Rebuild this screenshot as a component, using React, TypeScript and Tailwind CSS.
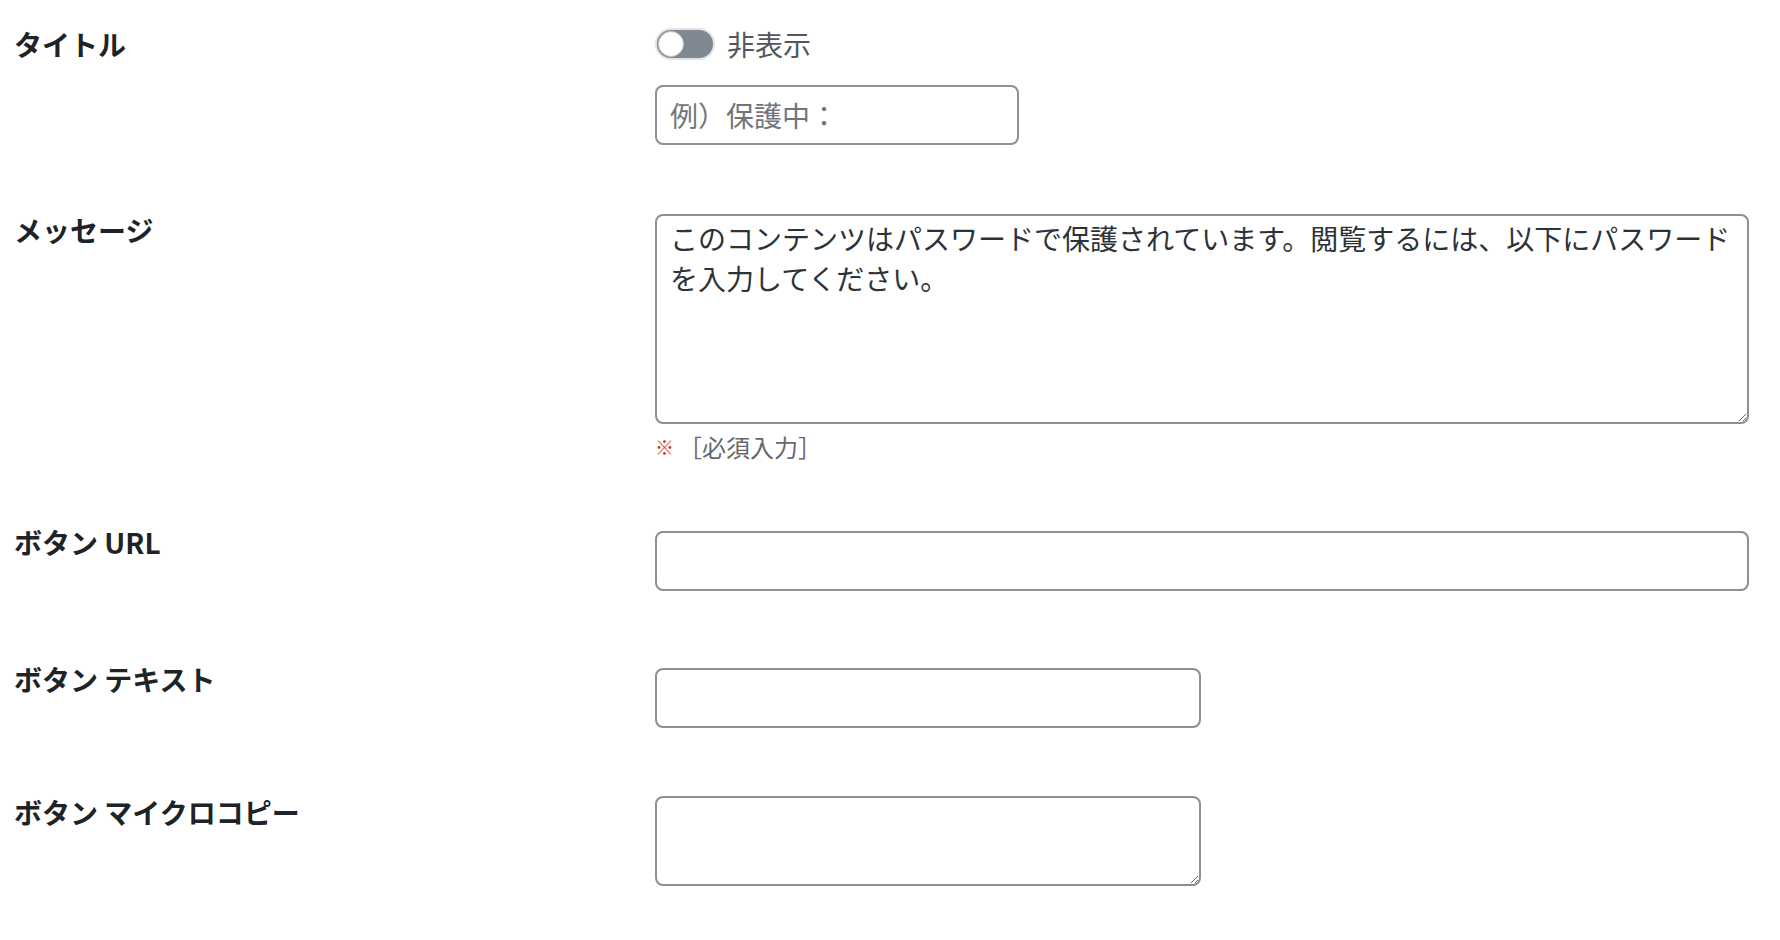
import { useState } from "react";

const font = { fontFamily: '"Noto Sans CJK JP", "Noto Sans", sans-serif' };

const Label = ({ children }: { children: React.ReactNode }) => (
  <div className="w-[641px] shrink-0 text-[28px] leading-[40px] font-bold text-[#1d2327]">
    {children}
  </div>
);

const inputCls =
  "block h-[60px] rounded-[8px] border-2 border-[#8c8f94] bg-white px-[13px] text-[28px] text-[#2c3338] placeholder:text-[#70757b] outline-none";

const textareaCls =
  "block rounded-[8px] border-2 border-[#8c8f94] bg-white pl-[13px] pr-[8px] pt-[2px] text-[28px] leading-[40px] text-[#2c3338] outline-none";

const App = () => {
  const [show, setShow] = useState(false);

  return (
    <div className="min-h-screen bg-white pl-[14px] pt-[24px]" style={font}>
      {/* タイトル */}
      <div className="flex items-start">
        <Label>タイトル</Label>
        <div className="w-[1094px]">
          <div className="flex h-[40px] items-center gap-[12px]">
            <button
              type="button"
              onClick={() => setShow(!show)}
              className="relative h-[32px] w-[60px] rounded-full border-2 border-[#e2e3e5] bg-[#7f8791]"
            >
              <span className="absolute left-[1px] top-[1px] h-[26px] w-[26px] rounded-full border border-[#c3c4c7] bg-white" />
            </button>
            <span className="text-[28px] leading-[40px] text-[#50575e]">非表示</span>
          </div>
          <input
            className={`${inputCls} mt-[21px] w-[364px]`}
            placeholder="例）保護中："
            style={font}
          />
        </div>
      </div>

      {/* メッセージ */}
      <div className="mt-[65px] flex items-start">
        <Label>メッセージ</Label>
        <div className="w-[1094px] pt-[4px]">
          <textarea
            className={`${textareaCls} h-[210px] w-[1094px]`}
            defaultValue="このコンテンツはパスワードで保護されています。閲覧するには、以下にパスワードを入力してください。"
            style={font}
          />
          <div className="mt-[10px] flex items-center leading-[26px]">
            <span className="text-[19px] font-bold text-[#e02b27]">※</span>
            <span className="ml-[4px] text-[24px] text-[#646970]">［必須入力］</span>
          </div>
        </div>
      </div>

      {/* ボタン URL */}
      <div className="mt-[62px] flex items-start">
        <Label>ボタン URL</Label>
        <div className="w-[1094px] pt-[9px]">
          <input className={`${inputCls} w-[1094px]`} style={font} />
        </div>
      </div>

      {/* ボタン テキスト */}
      <div className="mt-[68px] flex items-start">
        <Label>ボタン テキスト</Label>
        <div className="w-[1094px] pt-[9px]">
          <input className={`${inputCls} w-[546px]`} style={font} />
        </div>
      </div>

      {/* ボタン マイクロコピー */}
      <div className="mt-[64px] flex items-start">
        <Label>ボタン マイクロコピー</Label>
        <div className="w-[1094px] pt-[4px]">
          <textarea className={`${textareaCls} h-[90px] w-[546px]`} style={font} />
        </div>
      </div>
    </div>
  );
};

export default App;
